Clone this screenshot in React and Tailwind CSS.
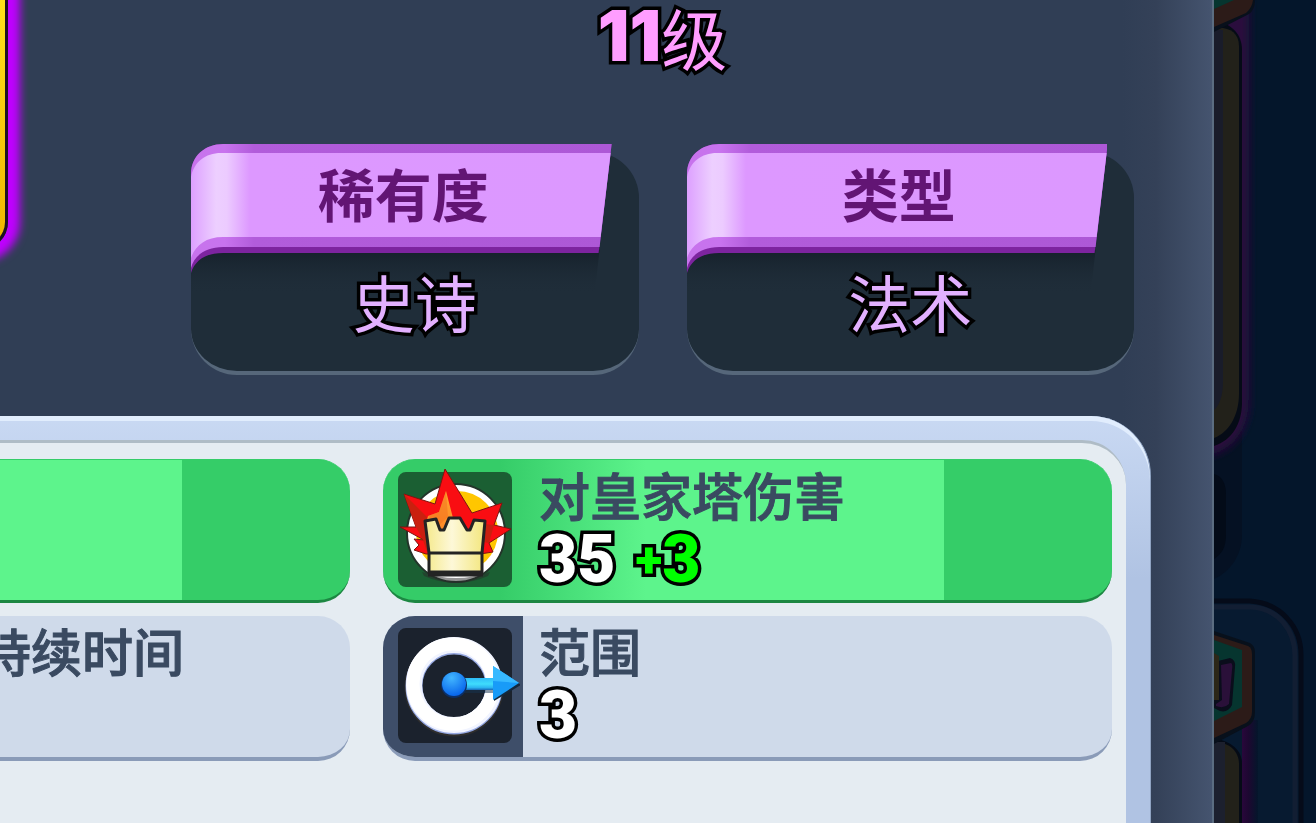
import { useId } from 'react';

const OUTLINE =
  '[-webkit-text-stroke:7px_#000] [paint-order:stroke_fill] [text-shadow:0_3px_0_#000]';

const facts = [
  { label: '稀有度', value: '史诗' },
  { label: '类型', value: '法术' },
];

function Ribbon() {
  const id = useId();
  return (
    <svg
      viewBox="0 0 419 150"
      preserveAspectRatio="none"
      className="absolute left-0 top-0 w-full h-[150px]"
      aria-hidden="true"
    >
      <defs>
        <linearGradient id={`${id}face`} gradientUnits="userSpaceOnUse" x1="0" x2="419" y1="0" y2="0">
          <stop offset="0" stopColor="#dda0ff" />
          <stop offset="0.06" stopColor="#edcfff" />
          <stop offset="0.085" stopColor="#eccbff" />
          <stop offset="0.14" stopColor="#dd98ff" />
          <stop offset="1" stopColor="#dc98ff" />
        </linearGradient>
        <linearGradient id={`${id}band`} gradientUnits="userSpaceOnUse" x1="0" x2="419" y1="0" y2="0">
          <stop offset="0" stopColor="#c773ec" />
          <stop offset="0.08" stopColor="#c873ee" />
          <stop offset="0.15" stopColor="#b25cdb" />
          <stop offset="1" stopColor="#ad58d6" />
        </linearGradient>
        <linearGradient id={`${id}shade`} x1="0" x2="0" y1="0" y2="1">
          <stop offset="0" stopColor="#15202a" />
          <stop offset="1" stopColor="#1f2d39" stopOpacity="0" />
        </linearGradient>
      </defs>
      <path d="M0 128C4 114 16 106 30 106H407L402 150H0Z" fill={`url(#${id}shade)`} />
      <path d="M0 129V30C0 12 14 0 32 0H419L406 109H32C15 109 4 116 0 129Z" fill="#7d249f" />
      <path d="M0 124V30C0 12 14 0 32 0H419L407 103H32C14 103 3 112 0 124Z" fill={`url(#${id}band)`} />
      <path d="M0 114V33C3 18 14 9 30 9H418L408 93H32C14 93 4 102 0 114Z" fill={`url(#${id}face)`} />
    </svg>
  );
}

function FactCard({ label, value }) {
  return (
    <div className="flex-1 mt-2 rounded-[46px] border-b-4 border-[#56677a] bg-[#1f2d39]">
      <dt className="relative -mt-2 w-[94%] h-[108px]">
        <Ribbon />
        <span className="relative flex h-full items-center justify-center pb-3 pl-1 text-[57px] leading-[60px] font-bold text-[#621574]">
          {label}
        </span>
      </dt>
      <dd className={`relative pt-[10px] pb-[30px] text-center text-[62px] leading-[79px] text-[#e2b0ff] ${OUTLINE}`}>
        {value}
      </dd>
    </div>
  );
}

function CrownDamageIcon() {
  return (
    <svg viewBox="-2 3 130 130" className="w-[130px] h-[130px] shrink-0" aria-hidden="true">
      <defs>
        <linearGradient id="crown" x1="0" x2="1">
          <stop offset="0" stopColor="#f5e98a" />
          <stop offset="0.45" stopColor="#fdf8d8" />
          <stop offset="1" stopColor="#f3e67c" />
        </linearGradient>
        <linearGradient id="flame" x1="0" x2="0" y1="0" y2="1">
          <stop offset="0" stopColor="#ffa52e" />
          <stop offset="1" stopColor="#ff8426" />
        </linearGradient>
      </defs>
      <circle cx="64" cy="71" r="49" fill="#fff" stroke="#23352a" strokeWidth="2" />
      <path d="M30 110Q64 122 98 110L96 114Q64 128 32 114Z" fill="#2a2a2a" opacity="0.5" />
      <circle cx="65" cy="70" r="41" fill="#ffc600" />
      <path
        d="M53 7L80 51L110 41L102 63L119 67L97 81L101 90L88 92H34L22 88L27 83L22 77L32 78L8 65L24 65L12 32L43 42Z"
        fill="#f90d12"
        stroke="#7d1510"
        strokeWidth="1"
      />
      <path d="M12 32L35 55L35 90L31 78L24 65ZM102 63L92 62L91 80L97 81Z" fill="#c9200f" />
      <path d="M54 29L61 56L74 66L70 76H46L35 58L36 54L47 50Z" fill="url(#flame)" />
      <path d="M54 29L56 55L45 65L36 54L47 50Z" fill="#f06a1c" opacity="0.45" />
      <path
        d="M33 59L44 57L48 68H52L57 56H68L75 68H78L82 58L93 59L90 91V110H37V91Z"
        fill="url(#crown)"
        stroke="#242424"
        strokeWidth="3"
        strokeLinejoin="round"
      />
      <path d="M36 91H91" stroke="#242424" strokeWidth="3" />
      <path d="M36 112H91" stroke="#242424" strokeWidth="5" />
    </svg>
  );
}

function RangeIcon() {
  return (
    <svg viewBox="-2 0 130 130" className="w-[130px] h-[130px] shrink-0" aria-hidden="true">
      <defs>
        <radialGradient id="knob" cx="0.4" cy="0.25" r="0.8">
          <stop offset="0" stopColor="#42b6ff" />
          <stop offset="1" stopColor="#0460ea" />
        </radialGradient>
        <linearGradient id="shaft" x1="0" x2="0" y1="0" y2="1">
          <stop offset="0" stopColor="#2ebcf8" />
          <stop offset="0.5" stopColor="#3fdcfd" />
          <stop offset="0.8" stopColor="#2cb4f0" />
          <stop offset="1" stopColor="#1767b8" />
        </linearGradient>
      </defs>
      <circle cx="62" cy="66" r="41" fill="none" stroke="#2e2d2c" strokeWidth="17" />
      <circle cx="62" cy="65" r="40" fill="none" stroke="#93a6e0" strokeWidth="17" />
      <circle cx="62" cy="64" r="40" fill="none" stroke="#f1f4ff" strokeWidth="16" />
      <circle cx="61" cy="63" r="40" fill="none" stroke="#fff" strokeWidth="13" />
      <path d="M70 60H103V72H70Z" fill="#153352" opacity="0.5" />
      <path d="M70 57H103V69H70Z" fill="url(#shaft)" />
      <path d="M102 47L129 64L102 80Z" fill="#14283d" />
      <path d="M101 45L127 62L101 79Z" fill="#189bf8" />
      <path d="M101 45L127 62L101 60Z" fill="#37b9ff" />
      <circle cx="62" cy="64" r="13" fill="#0c2f66" />
      <circle cx="62" cy="63" r="12" fill="url(#knob)" />
    </svg>
  );
}

// Dimmed collection cards that show behind the dialog
function Backdrop() {
  return (
    <aside className="w-[102px] shrink-0 overflow-hidden bg-[#04162b]" aria-hidden="true">
      <svg viewBox="0 0 102 823" className="w-[102px] h-[823px]">
        <defs>
          <linearGradient id="glow" x1="0" x2="1">
            <stop offset="0" stopColor="#29073b" />
            <stop offset="0.4" stopColor="#1d0831" />
            <stop offset="1" stopColor="#04162b" />
          </linearGradient>
          <filter id="soft" x="-50%" y="-20%" width="200%" height="140%">
            <feGaussianBlur stdDeviation="4" />
          </filter>
        </defs>

        <path d="M0 430H28V535C28 555 16 572 0 579Z" fill="#051123" />
        <path d="M0 474C8 476 12 484 12 494V535C12 547 8 554 0 559Z" fill="#030b18" />

        <path d="M-6 -20H35V400C35 430 20 450 -6 456Z" fill="#2c073d" filter="url(#soft)" />
        <path d="M0 20C18 24 28 34 28 50V402C28 424 18 440 0 446Z" fill="#050b16" />
        <path d="M0 28C14 26 25 32 25 46V394C25 416 14 433 0 438Z" fill="#22211a" />
        <path d="M0 30H9V382C9 396 5 406 0 410Z" fill="#191c2a" />
        <path d="M0 32L35 14Q42 9 41 -4H0Z" fill="#08101b" />
        <path d="M0 27L32 13Q38 8 39 0H0Z" fill="#2c1b18" />
        <path d="M0 9L20 0H0Z" fill="#06352f" />

        <path d="M-4 601H36C66 603 87 626 87 655V830H-4Z" fill="#071a30" stroke="#050b19" strokeWidth="5" />
        <path d="M-4 607H36C64 608 81 630 81 656V830" fill="none" stroke="#121e33" strokeWidth="5" />
        <path d="M28 720H44V823H28Z" fill="url(#glow)" />
        <path d="M0 738C18 742 28 750 28 764V823H0Z" fill="#050b16" />
        <path d="M0 742C16 742 25 752 25 764V823H0Z" fill="#22211a" />
        <path d="M0 742H11V823H0Z" fill="#1c202e" />
        <path d="M0 631L36 643Q41 646 41 652L41 712Q41 722 34 726L0 744Z" fill="#08101b" />
        <path d="M0 635L34 646Q38 648 38 654V712Q38 719 32 723L0 738Z" fill="#2c1b18" />
        <path d="M0 640L28 650V707L0 721Z" fill="#06352f" />
        <path d="M4 661L16 658Q22 660 21 667L18 705Q14 713 6 711L0 708V660Z" fill="#0a0d1b" />
        <path d="M7 665L17 663Q19 664 18 670L15 704Q10 709 2 706V704L8 700Z" fill="#2a1039" />
        <path d="M0 653L5 656V700H0Z" fill="#2c2718" />
      </svg>
    </aside>
  );
}

const LABEL =
  'text-[51px] leading-[52px] font-medium text-[#3a4a61] whitespace-nowrap [-webkit-text-stroke:1px_#3a4a61]';
const NUMBER = `font-[Roboto,sans-serif] text-[66px] leading-[60px] font-black ${OUTLINE}`;

export default function App() {
  return (
    <div className="flex min-h-screen overflow-hidden bg-[#04162b] font-['Noto_Sans_CJK_SC',sans-serif]">
      <main className="flex min-w-0 flex-1 flex-col border-r-2 border-[#5b6d81] bg-[linear-gradient(to_left,#45546f_0,#344158_56px,#303e55_90px)]">
        <header className="flex pb-[41px]">
          <div className="w-[191px] shrink-0 overflow-hidden">
            <div className="-ml-12 h-[250px] w-14 rounded-br-[28px] border-r-[3px] border-b-4 border-[#1d1320] bg-linear-to-b from-[#ffe01b] to-[#f0b400] shadow-[0_0_8px_12px_#c000ff]" />
          </div>
          <div className="min-w-0 flex-1 pr-[78px]">
            <h1 className={`flex h-36 items-start justify-center text-[66px] leading-[72px] text-[#ff9dff] ${OUTLINE}`}>
              <span className="font-[Inter,sans-serif] text-[70px] font-black">11</span>
              <span>级</span>
            </h1>
            <dl className="flex gap-12">
              {facts.map((f) => (
                <FactCard key={f.label} {...f} />
              ))}
            </dl>
          </div>
        </header>

        <section className="mr-[61px] flex-1 rounded-tr-[60px] border-r border-[#8fa3c2] bg-linear-to-b from-[#c9d9f3] to-[#b0c3e3] to-40% pt-6 pr-6 shadow-[inset_0_5px_0_#e1edfd]">
          <div className="flex h-full gap-[33px] rounded-tr-[44px] border-t-[3px] border-[#afbcc6] bg-[#e5ecf2] pt-4 pr-[14px]">
            <div className="flex w-[350px] shrink-0 flex-col gap-[13px]">
              <div className="h-[144px] overflow-hidden rounded-r-[32px] border-t border-b-[3px] border-t-[#35cc68] border-b-[#1c8742] bg-[#35cd68]">
                <div className="h-full w-[52%] bg-[#5df48c]" />
              </div>
              <div className="h-[145px] overflow-hidden rounded-r-[32px] border-b-4 border-[#8a9bb8] bg-[#cfdaea] pt-2">
                <div className="flex w-[184px] justify-end">
                  <span className={LABEL}>持续时间</span>
                </div>
              </div>
            </div>

            <div className="flex min-w-0 flex-1 flex-col gap-[13px]">
              <div className="flex h-[144px] rounded-[32px] border-t border-b-[3px] border-t-[#35cc68] border-b-[#1c8742] bg-[linear-gradient(90deg,#35cc68_16%,#5df48c_36%,#5df48c_77%,#35cd68_77%)]">
                <div className="w-[140px] shrink-0 pt-3 pl-[15px]">
                  <div className="flex h-[115px] w-[114px] items-center justify-center rounded-lg bg-[#1b5f33]">
                    <CrownDamageIcon />
                  </div>
                </div>
                <div className="pt-2 pl-4">
                  <p className={LABEL}>对皇家塔伤害</p>
                  <p className={`mt-[10px] flex gap-5 text-white ${NUMBER}`}>
                    <span>35</span>
                    <span className="flex items-center text-[#00ff00]">
                      <span className="text-[50px]">+</span>3
                    </span>
                  </p>
                </div>
              </div>

              <div className="flex h-[145px] overflow-hidden rounded-[32px] border-b-4 border-[#8a9bb8] bg-[#cfdaea]">
                <div className="w-[140px] shrink-0 bg-[#3e4e69] pt-3 pl-[15px]">
                  <div className="flex h-[115px] w-[114px] items-center justify-center rounded-lg bg-[#1b222d]">
                    <RangeIcon />
                  </div>
                </div>
                <div className="pt-2 pl-4">
                  <p className={LABEL}>范围</p>
                  <p className={`mt-[10px] text-white ${NUMBER}`}>3</p>
                </div>
              </div>
            </div>
          </div>
        </section>
      </main>
      <Backdrop />
    </div>
  );
}
